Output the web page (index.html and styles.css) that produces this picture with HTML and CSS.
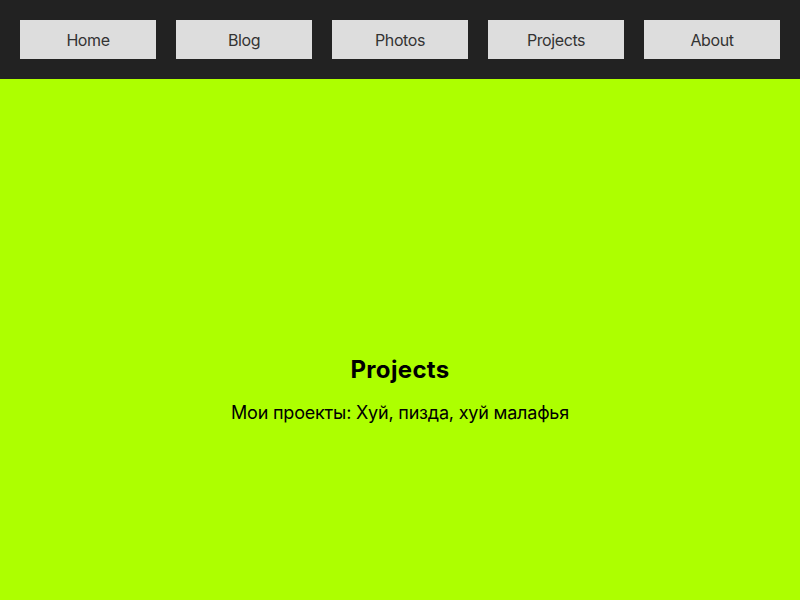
FILE: index.html
```html
<!DOCTYPE html>
<html lang="ru">
<head>
<meta charset="utf-8">
<title>Projects</title>
<link rel="stylesheet" href="styles.css">
</head>
<body>
<header class="topbar">
  <nav class="nav">
    <a class="nav-btn" href="#">Home</a>
    <a class="nav-btn" href="#">Blog</a>
    <a class="nav-btn" href="#">Photos</a>
    <a class="nav-btn" href="#">Projects</a>
    <a class="nav-btn" href="#">About</a>
  </nav>
</header>
<main class="content">
  <h1 class="title">Projects</h1>
  <p class="text">Мои проекты: Хуй, пизда, хуй малафья</p>
</main>
</body>
</html>
```
FILE: styles.css
```css
html, body {
  margin: 0;
  padding: 0;
  height: 100%;
}
body {
  font-family: Inter, Roboto, "Noto Sans", sans-serif;
  background: #adff00;
  display: flex;
  flex-direction: column;
}
.topbar {
  background: #222222;
  padding: 20px;
}
.nav {
  display: flex;
  gap: 20px;
}
.nav-btn {
  flex: 1;
  height: 39px;
  display: flex;
  align-items: center;
  justify-content: center;
  background: #dddddd;
  color: #333333;
  text-decoration: none;
  font-size: 16px;
  letter-spacing: -0.4px;
}
.content {
  flex: 1;
  display: flex;
  flex-direction: column;
  align-items: center;
  justify-content: center;
  padding-top: 100px;
  text-align: center;
}
.title {
  margin: 0 0 17px;
  font-size: 24px;
  line-height: 30px;
  font-weight: 700;
  letter-spacing: 0.35px;
  color: #000;
}
.text {
  margin: 0;
  font-size: 18px;
  line-height: 22px;
  letter-spacing: -0.2px;
  color: #000;
}
```
